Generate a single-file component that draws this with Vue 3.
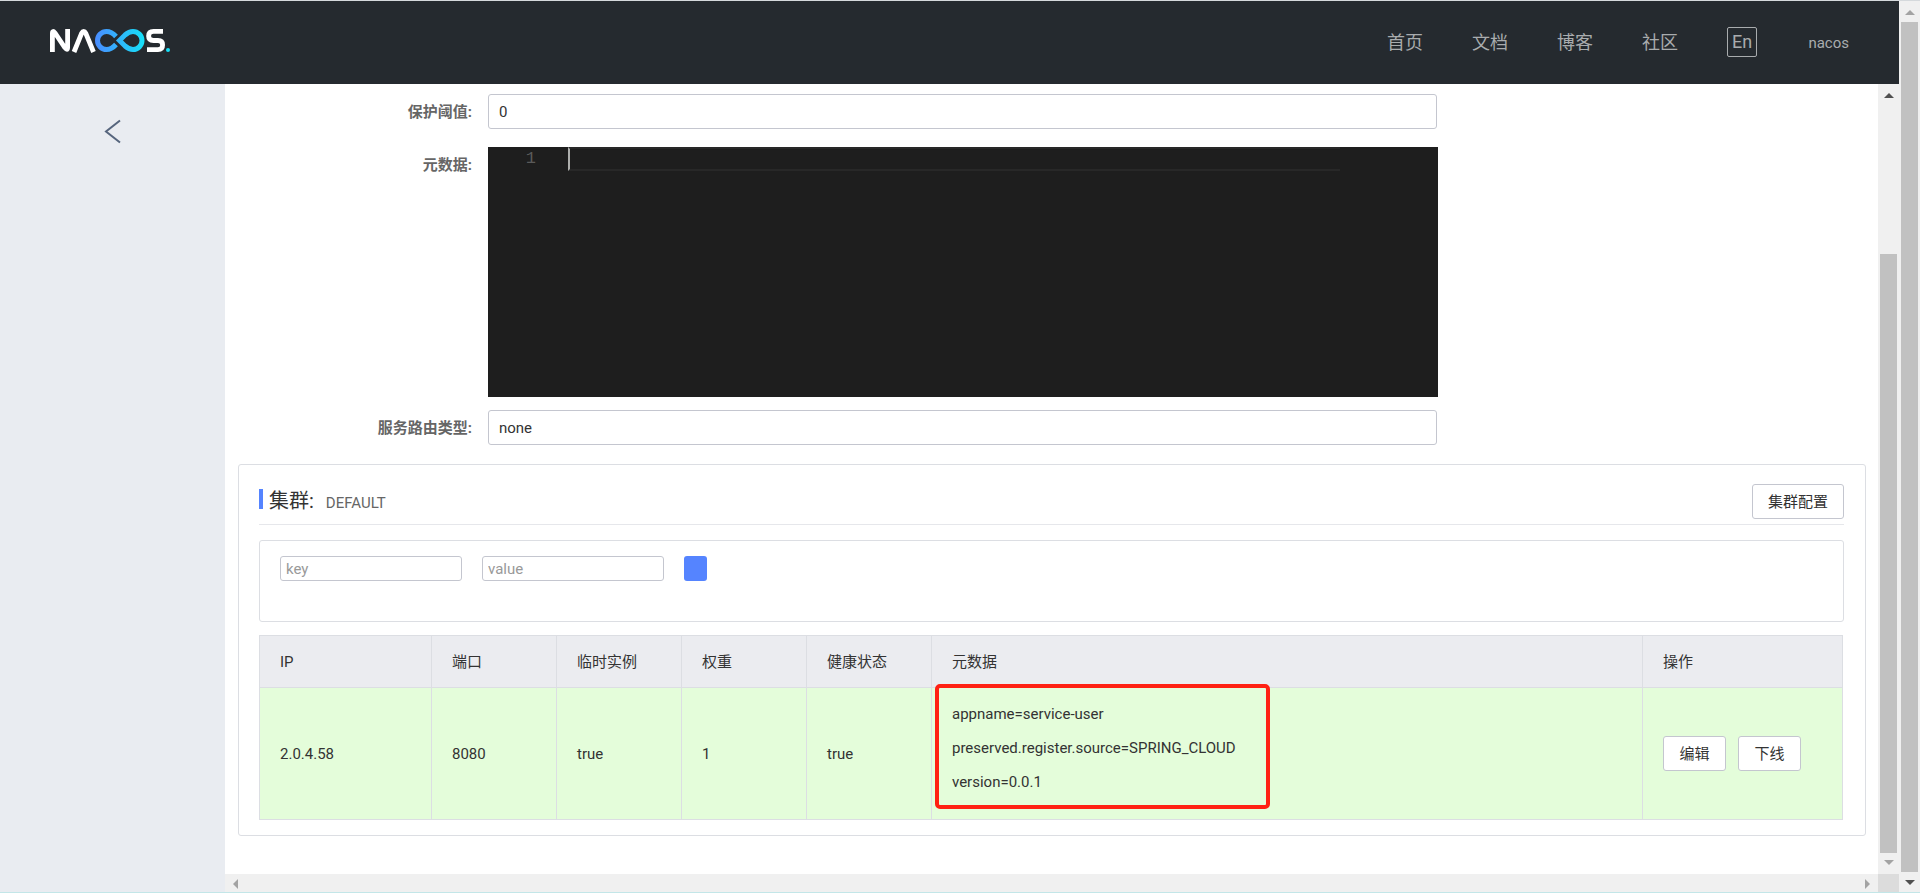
<script setup>
import { ref } from 'vue'

const navLinks = ['首页', '文档', '博客', '社区']
const threshold = ref('0')
const routeType = ref('none')
const metadata = ref('')
const filterKey = ref('')
const filterValue = ref('')
const columns = ['IP', '端口', '临时实例', '权重', '健康状态', '元数据', '操作']
const instances = [
  {
    ip: '2.0.4.58',
    port: 8080,
    ephemeral: true,
    weight: 1,
    healthy: true,
    metadata: ['appname=service-user', 'preserved.register.source=SPRING_CLOUD', 'version=0.0.1'],
  },
]
</script>

<template>
  <div class="window">
    <div class="app">
      <header class="topbar">
        <a class="logo" href="#" aria-label="Nacos">
          <svg width="120" height="24" viewBox="0 0 120 24" fill="none">
            <defs>
              <linearGradient id="loop" gradientUnits="userSpaceOnUse" x1="45" y1="0" x2="94" y2="0">
                <stop offset="0" stop-color="#4a8cff" />
                <stop offset="1" stop-color="#16e0f8" />
              </linearGradient>
            </defs>
            <g stroke="#fff" stroke-width="4.800">
              <path d="M2.400 23V4.500Q2.400 0.800 5 4L14.800 18.500Q17.600 22 17.600 18.500V0" />
              <path d="M24 23L31.500 4.500Q33.700 0.500 35.900 4.500L43.500 23" />
              <path d="M113 2.400H103.500Q98.600 2.400 98.600 7Q98.600 11.500 103.500 11.500H108Q112.600 11.500 112.600 16Q112.600 20.600 108 20.600H97" />
            </g>
            <g stroke="url(#loop)" stroke-width="5">
              <path d="M66 7.500Q61.500 2.500 56.500 2.500A9 9 0 0 0 56.500 20.500Q61.500 20.500 66 15.500" />
              <path d="M69.500 11.500L75 6Q79 2.500 83 2.500A9 9 0 0 1 83 20.500Q79 20.500 75 17Z" />
            </g>
            <circle cx="118" cy="21" r="2" fill="#16e0f8" />
          </svg>
        </a>
        <nav class="nav">
          <a v-for="link in navLinks" :key="link" href="#">{{ link }}</a>
          <button class="lang" type="button">En</button>
          <a class="user" href="#">nacos</a>
        </nav>
      </header>

      <div class="body">
        <aside class="side">
          <button class="back" type="button" aria-label="返回">
            <svg width="17" height="25" viewBox="0 0 17 25" fill="none" stroke="#56657d" stroke-width="2">
              <path d="M16 1.500L2 12.500L16 23.500" />
            </svg>
          </button>
        </aside>

        <main class="content">
          <div class="form">
            <div class="row">
              <label for="threshold">保护阈值:</label>
              <input id="threshold" v-model="threshold" class="field" type="text" />
            </div>
            <div class="row">
              <label for="metadata">元数据:</label>
              <div class="editor">
                <span class="gutter">1</span>
                <div class="code">
                  <textarea id="metadata" v-model="metadata" rows="1"></textarea>
                </div>
              </div>
            </div>
            <div class="row">
              <label for="route">服务路由类型:</label>
              <select id="route" v-model="routeType" class="field">
                <option>none</option>
              </select>
            </div>
          </div>

          <section class="card">
            <div class="card-head">
              <h2>集群:</h2>
              <span class="cluster">DEFAULT</span>
              <button class="btn" type="button">集群配置</button>
            </div>
            <div class="filter">
              <input v-model="filterKey" type="text" placeholder="key" aria-label="key" />
              <input v-model="filterValue" type="text" placeholder="value" aria-label="value" />
              <button class="add" type="button" aria-label="添加"></button>
            </div>
            <table>
              <colgroup>
                <col class="w-ip" />
                <col v-for="n in 4" :key="n" class="w-short" />
                <col />
                <col class="w-ops" />
              </colgroup>
              <thead>
                <tr>
                  <th v-for="c in columns" :key="c" scope="col">{{ c }}</th>
                </tr>
              </thead>
              <tbody>
                <tr v-for="i in instances" :key="i.ip">
                  <td>{{ i.ip }}</td>
                  <td>{{ i.port }}</td>
                  <td>{{ i.ephemeral }}</td>
                  <td>{{ i.weight }}</td>
                  <td>{{ i.healthy }}</td>
                  <td class="meta">
                    <p v-for="m in i.metadata" :key="m">{{ m }}</p>
                    <div class="mark"></div>
                  </td>
                  <td>
                    <div class="ops">
                      <button class="btn" type="button">编辑</button>
                      <button class="btn" type="button">下线</button>
                    </div>
                  </td>
                </tr>
              </tbody>
            </table>
          </section>
        </main>

        <div class="vbar inner" aria-hidden="true">
          <svg width="10" height="5"><path d="M0 5L5 0L10 5Z" fill="#505050" /></svg>
          <div class="thumb"></div>
          <svg width="10" height="5"><path d="M0 0L5 5L10 0Z" fill="#a3a3a3" /></svg>
        </div>
        <div class="side-end"></div>
        <div class="hbar" aria-hidden="true">
          <svg width="5" height="10"><path d="M5 0L0 5L5 10Z" fill="#a3a3a3" /></svg>
          <svg width="5" height="10"><path d="M0 0L5 5L0 10Z" fill="#a3a3a3" /></svg>
        </div>
        <div class="corner"></div>
      </div>
    </div>
    <div class="vbar outer" aria-hidden="true">
      <svg width="10" height="5"><path d="M0 5L5 0L10 5Z" fill="#a3a3a3" /></svg>
      <div class="thumb"></div>
      <svg width="10" height="5"><path d="M0 0L5 5L10 0Z" fill="#505050" /></svg>
    </div>
  </div>
</template>

<style>
body {
  margin: 0;
}
</style>

<style scoped>
* {
  box-sizing: border-box;
}
.window {
  display: flex;
  height: 100vh;
  border-top: 1px solid #d5d9dc;
  border-bottom: 1px solid #c3e6e8;
  background: #fff;
  color: #333;
  font: 15px/20px Roboto, "Noto Sans CJK SC", sans-serif;
}
button,
input,
select,
textarea {
  font: inherit;
  color: inherit;
}
button {
  cursor: pointer;
}
.app {
  flex: 1;
  min-width: 0;
  display: flex;
  flex-direction: column;
}
.topbar {
  flex: none;
  height: 83px;
  padding: 0 50px;
  display: flex;
  align-items: center;
  justify-content: space-between;
  background: #252a2f;
}
.logo {
  display: flex;
  padding-bottom: 4px;
}
.nav {
  display: flex;
  align-items: center;
  gap: 49px;
}
.nav a {
  color: #a9acae;
  font-size: 18px;
  text-decoration: none;
}
.nav .user {
  min-width: 43px;
  font-size: 15px;
  text-align: right;
}
.lang {
  width: 30px;
  height: 30px;
  margin-bottom: 2px;
  padding: 0;
  border: 1px solid #a9acae;
  border-radius: 2px;
  background: none;
  color: #a9acae;
  font-size: 18px;
  line-height: 26px;
}
.body {
  flex: 1;
  min-height: 0;
  display: grid;
  grid-template-columns: 225px minmax(0, 1fr) 21px;
  grid-template-rows: minmax(0, 1fr) 18px;
}
.side,
.side-end {
  background: #e9ecf1;
}
.side-end {
  grid-column: 1;
}
.back {
  display: block;
  margin: 35px 0 0 104px;
  padding: 0;
  border: 0;
  background: none;
}
.back svg {
  display: block;
}
.content {
  padding: 10px 12px 0 13px;
  overflow: hidden;
}
.form {
  display: grid;
}
.row {
  display: grid;
  grid-template-columns: 234px minmax(0, 950px);
  column-gap: 16px;
}
.row:nth-child(2) {
  margin: 18px 0 13px;
}
.row label {
  color: #666;
  font-weight: 700;
  text-align: right;
  line-height: 37px;
  max-height: 35px;
}
.field {
  width: calc(100% - 1px);
  height: 35px;
  padding: 0 10px;
  border: 1px solid #c4c6cf;
  border-radius: 3px;
  background: #fff;
  appearance: none;
}
.editor {
  display: flex;
  height: 250px;
  background: #1e1e1e;
}
.gutter {
  width: 80px;
  padding-right: 32px;
  color: #5a5a5a;
  font: 17px/24px "Liberation Mono", monospace;
  text-align: right;
}
.code {
  flex: 1;
  margin-right: 98px;
}
.code textarea {
  display: block;
  width: 100%;
  height: 24px;
  padding: 0;
  border: 2px solid #282828;
  border-right: 0;
  border-left-color: #aeafad;
  outline: 0;
  resize: none;
  overflow: hidden;
  background: none;
  color: #d4d4d4;
}
.card {
  margin-top: 19px;
  padding: 19px 21px 15px 20px;
  border: 1px solid #dcdee3;
  border-radius: 3px;
}
.card-head {
  display: flex;
  align-items: flex-start;
  height: 41px;
  border-bottom: 1px solid #e6e7eb;
}
.card-head h2 {
  height: 20px;
  margin: 5px 12px 0 0;
  padding-left: 6px;
  border-left: 4px solid #5584ff;
  font-size: 20px;
  font-weight: 400;
  line-height: 24px;
}
.cluster {
  margin-top: 9px;
  color: #666;
}
.btn {
  min-width: 63px;
  height: 35px;
  padding: 0 15px;
  border: 1px solid #c4c6cf;
  border-radius: 3px;
  background: #fff;
  white-space: nowrap;
}
.card-head .btn {
  margin-left: auto;
}
.filter {
  display: flex;
  gap: 20px;
  height: 82px;
  margin: 15px 0 13px;
  padding: 15px 20px;
  border: 1px solid #dcdee3;
  border-radius: 3px;
}
.filter input {
  width: 182px;
  height: 25px;
  padding: 0 5px;
  border: 1px solid #c4c6cf;
  border-radius: 3px;
}
.filter input::placeholder {
  color: #999;
  opacity: 1;
}
.add {
  width: 23px;
  height: 25px;
  padding: 0;
  border: 0;
  border-radius: 3px;
  background: #5584ff;
}
table {
  width: calc(100% - 1px);
  table-layout: fixed;
  border-spacing: 0;
  border-top: 1px solid #dcdee3;
  border-left: 1px solid #dcdee3;
}
.w-ip {
  width: 172px;
}
.w-short {
  width: 125px;
}
.w-ops {
  width: 200px;
}
th,
td {
  padding: 16px 20px;
  border-right: 1px solid #dcdee3;
  border-bottom: 1px solid #dcdee3;
  text-align: left;
}
th {
  height: 52px;
  padding: 0 20px;
  background: #ebecf0;
  font-weight: 400;
}
td {
  background: #e4fdda;
}
.meta {
  position: relative;
  padding-bottom: 13px;
}
.meta p {
  margin: 0 0 14px;
}
.mark {
  position: absolute;
  top: -4px;
  left: 3px;
  width: 335px;
  height: 125px;
  border: 4px solid #ff2113;
  border-radius: 5px;
}
.ops {
  display: flex;
  gap: 12px;
}
.vbar {
  display: flex;
  flex-direction: column;
  align-items: center;
  background: #f0f0f0;
}
.vbar svg {
  flex: none;
}
.thumb {
  width: 17px;
  flex: 1;
  background: #c1c1c1;
}
.inner {
  padding: 9px 0;
}
.inner .thumb {
  margin: 156px 0 7px;
}
.outer {
  width: 21px;
  flex: none;
  padding: 9px 0 7px;
}
.outer .thumb {
  margin: 7px 0 8px;
}
.hbar {
  display: flex;
  align-items: center;
  justify-content: space-between;
  padding: 2px 8px 0;
  background: #f0f0f0;
}
.corner {
  background: #dcdcdc;
}
</style>
